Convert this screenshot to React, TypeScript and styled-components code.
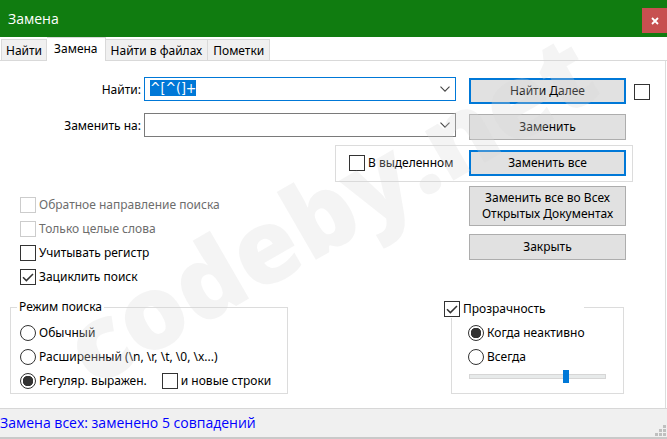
import React, { useEffect, useRef, useState } from "react";
import styled, { createGlobalStyle } from "styled-components";

const GlobalStyle = createGlobalStyle`
  *, *::before, *::after { box-sizing: border-box; }
  body {
    margin: 0;
    background: #ffffff;
    color: #000000;
    font-family: "Noto Sans", "DejaVu Sans", sans-serif;
    font-size: 12px;
    line-height: 16px;
  }
  button, input { font: inherit; color: inherit; }
`;

const Dialog = styled.div`
  position: relative;
  display: flex;
  flex-direction: column;
  min-height: 100vh;
  overflow: hidden;
`;

const TitleBar = styled.header`
  display: flex;
  align-items: center;
  justify-content: space-between;
  height: 37px;
  padding-left: 8px;
  background: #107c10;
  color: #ffffff;
`;

const Title = styled.h1`
  margin: 0;
  font: 400 14px/20px "Open Sans", "Noto Sans", sans-serif;
`;

const CloseButton = styled.button`
  display: flex;
  align-items: center;
  justify-content: center;
  width: 25px;
  height: 25px;
  margin-top: 4px;
  padding: 0;
  border: 0;
  background: #c75050;
`;

const TabBar = styled.nav`
  display: flex;
  align-items: flex-end;
  height: 24px;
  padding-left: 1px;
  border-bottom: 1px solid #d9d9d9;
`;

const Tab = styled.button<{ $active?: boolean }>`
  height: ${(p) => (p.$active ? 24 : 21)}px;
  margin-bottom: ${(p) => (p.$active ? -1 : 0)}px;
  padding: ${(p) => (p.$active ? "0 7px 2px" : "2px 5px 0")};
  border: 1px solid #d9d9d9;
  border-bottom: 0;
  border-left-width: ${(p) => (p.$active ? 0 : 1)}px;
  background: ${(p) => (p.$active ? "#ffffff" : "#f0f0f0")};
  white-space: nowrap;

  &:first-child { padding: 2px 4px 0; }
  & + & { border-left-width: 0; }
`;

const Panel = styled.main`
  flex: 1;
  margin-right: 1px;
  padding: 16px 15px 0 10px;
  border-right: 1px solid #dcdcdc;
`;

const FieldRow = styled.div<{ $trailing?: boolean }>`
  display: flex;
  align-items: flex-start;
  height: 36px;
  padding-right: ${(p) => (p.$trailing ? 0 : 24)}px;
`;

const FieldLabel = styled.label`
  width: 131px;
  margin-right: 3px;
  padding-top: 5px;
  text-align: right;
`;

const Combo = styled.div`
  display: flex;
  flex: 1;
  height: 24px;
  margin-right: 13px;
  border: 1px solid #7a7a7a;
  background: #ffffff;

  &:focus-within { border-color: #0078d7; }
`;

const ComboInput = styled.input`
  flex: 1;
  min-width: 0;
  padding: 0 5px 2px;
  border: 0;
  outline: 0;
  background: transparent;
  font: 14px/16px "DejaVu Sans Condensed", "DejaVu Sans", sans-serif;

  &::selection { background: #0078d7; color: #ffffff; }
`;

const ComboArrow = styled.button`
  display: flex;
  align-items: center;
  justify-content: center;
  width: 20px;
  padding: 0;
  border: 0;
  background: transparent;
`;

const Action = styled.button<{ $primary?: boolean; $tall?: boolean }>`
  width: 157px;
  height: ${(p) => (p.$tall ? 40 : 26)}px;
  padding: 0 4px;
  border: ${(p) => (p.$primary ? "2px solid #0078d7" : "1px solid #adadad")};
  background: #e1e1e1;
`;

const ActionSlot = styled.div`
  margin-top: 1px;
`;

const Check = styled.input.attrs({ type: "checkbox" })`
  appearance: none;
  flex: none;
  width: 16px;
  height: 16px;
  margin: 0;
  border: 1px solid #333333;
  background: #ffffff center / 14px 14px no-repeat;

  &:checked {
    background-image: url("data:image/svg+xml,%3Csvg xmlns='http://www.w3.org/2000/svg' viewBox='0 0 14 14'%3E%3Cpath d='M2 7.2l3.4 3.4L12 4' fill='none' stroke='%23333' stroke-width='1.5'/%3E%3C/svg%3E");
  }
  &:disabled { border-color: #cccccc; }
`;

const Radio = styled.input.attrs({ type: "radio" })`
  appearance: none;
  flex: none;
  width: 16px;
  height: 16px;
  margin: 0;
  border: 1px solid #333333;
  border-radius: 50%;
  background: #ffffff;

  &:checked { background: radial-gradient(circle, #333333 5px, #ffffff 5.5px); }
`;

const Option = styled.label<{ $disabled?: boolean }>`
  display: flex;
  align-items: center;
  gap: 3px;
  height: 24px;
  padding-top: 1px;
  color: ${(p) => (p.$disabled ? "#6d6d6d" : "inherit")};
  white-space: nowrap;
`;

const SideCheck = styled.div`
  display: flex;
  margin: 7px 0 0 8px;
`;

const SelectionRow = styled.div`
  display: flex;
  justify-content: flex-end;
  margin: -4px 17px 0 0;
`;

const SelectionGroup = styled.div`
  display: flex;
  align-items: flex-start;
  justify-content: space-between;
  width: 298px;
  height: 37px;
  padding: 4px 6px 0 13px;
  border: 1px solid #dcdcdc;
`;

const MiddleRow = styled.div`
  display: flex;
  justify-content: space-between;
  padding: 4px 24px 0 10px;
`;

const Options = styled.div`
  padding-top: 6px;
`;

const ActionStack = styled.div`
  display: flex;
  flex-direction: column;
  gap: 8px;
`;

const GroupRow = styled.div`
  display: flex;
  justify-content: space-between;
  align-items: flex-start;
  margin: 8px 26px 0 0;
`;

const Group = styled.fieldset<{ $width: number; $inset: number }>`
  width: ${(p) => p.$width}px;
  height: 98px;
  min-width: 0;
  margin: 0;
  padding: 2px 8px 0 ${(p) => p.$inset}px;
  border: 1px solid #dcdcdc;
`;

const ModeLegend = styled.legend`
  height: 22px;
  margin-left: -3px;
  padding: 3px 2px;
`;

const ToggleLegend = styled.legend`
  position: relative;
  width: 140px;
  height: 22px;
  margin-left: -24px;
  padding: 0;
  background: #ffffff;
`;

const LegendOption = styled(Option)`
  height: 21px;
  padding: 5px 0 0;
`;

const RadioLine = styled.div`
  display: flex;
  gap: 15px;
`;

const Opacity = styled.input.attrs({ type: "range" })`
  appearance: none;
  display: block;
  width: 137px;
  height: 13px;
  margin: 2px 0 0 1px;
  background: transparent;

  &::-webkit-slider-runnable-track {
    height: 5px;
    border: 1px solid #d6d6d6;
    background: #e7eaea;
  }
  &::-webkit-slider-thumb {
    appearance: none;
    width: 6px;
    height: 13px;
    margin-top: -5px;
    background: #0078d7;
  }
`;

const StatusBar = styled.footer`
  display: flex;
  align-items: flex-end;
  justify-content: space-between;
  height: 31px;
  border-top: 1px solid #d7d7d7;
  border-bottom: 2px solid #c9c9c9;
  background: #f0f0f0;
  color: #0000ff;
`;

const StatusText = styled.p`
  margin: 0;
  font: 400 14px/28px "Open Sans", "Noto Sans", sans-serif;
`;

const Watermark = styled.div`
  position: absolute;
  left: 92px;
  bottom: 40px;
  color: rgba(215, 215, 215, 0.28);
  font: 800 103px/100px "Open Sans", sans-serif;
  white-space: nowrap;
  transform: rotate(-30deg);
  transform-origin: 0 89px;
  pointer-events: none;
`;

const Chevron = () => (
  <svg width="10" height="6" viewBox="0 0 10 6" aria-hidden="true">
    <path d="M.5.7 5 5.2 9.5.7" fill="none" stroke="#444" strokeWidth="1.1" />
  </svg>
);

const Grip = () => (
  <svg width="12" height="12" viewBox="0 0 12 12" aria-hidden="true">
    <path d="M8 0h3v3H8zM4 4h3v3H4zM8 4h3v3H8zM0 8h3v3H0zM4 8h3v3H4zM8 8h3v3H8z" fill="#bfbfbf" />
  </svg>
);

export default function App() {
  const findRef = useRef<HTMLInputElement>(null);
  const [mode, setMode] = useState("regex");
  const [fade, setFade] = useState("inactive");

  useEffect(() => {
    findRef.current?.focus();
    findRef.current?.select();
  }, []);

  return (
    <>
      <GlobalStyle />
      <Dialog>
        <TitleBar>
          <Title>Замена</Title>
          <CloseButton aria-label="Закрыть окно">
            <svg width="8" height="8" viewBox="0 0 8 8" aria-hidden="true">
              <path d="M1 1l6 6M7 1L1 7" stroke="#fff" strokeWidth="1.8" />
            </svg>
          </CloseButton>
        </TitleBar>
        <TabBar>
          <Tab>Найти</Tab>
          <Tab $active>Замена</Tab>
          <Tab>Найти в файлах</Tab>
          <Tab>Пометки</Tab>
        </TabBar>
        <Panel>
          <FieldRow $trailing>
            <FieldLabel htmlFor="find">Найти:</FieldLabel>
            <Combo>
              <ComboInput id="find" ref={findRef} defaultValue="^[^(]+" />
              <ComboArrow aria-label="История поиска"><Chevron /></ComboArrow>
            </Combo>
            <ActionSlot><Action $primary>Найти Далее</Action></ActionSlot>
            <SideCheck><Check aria-label="Две кнопки поиска" /></SideCheck>
          </FieldRow>
          <FieldRow>
            <FieldLabel htmlFor="replace">Заменить на:</FieldLabel>
            <Combo>
              <ComboInput id="replace" />
              <ComboArrow aria-label="История замены"><Chevron /></ComboArrow>
            </Combo>
            <ActionSlot><Action>Заменить</Action></ActionSlot>
          </FieldRow>
          <SelectionRow>
            <SelectionGroup>
              <Option><Check />В выделенном</Option>
              <Action $primary>Заменить все</Action>
            </SelectionGroup>
          </SelectionRow>
          <MiddleRow>
            <Options>
              <Option $disabled><Check disabled />Обратное направление поиска</Option>
              <Option $disabled><Check disabled />Только целые слова</Option>
              <Option><Check />Учитывать регистр</Option>
              <Option><Check defaultChecked />Зациклить поиск</Option>
            </Options>
            <ActionStack>
              <Action $tall>Заменить все во Всех Открытых Документах</Action>
              <Action>Закрыть</Action>
            </ActionStack>
          </MiddleRow>
          <GroupRow>
            <Group $width={278} $inset={9}>
              <ModeLegend>Режим поиска</ModeLegend>
              <Option>
                <Radio name="mode" checked={mode === "normal"} onChange={() => setMode("normal")} />
                Обычный
              </Option>
              <Option>
                <Radio name="mode" checked={mode === "extended"} onChange={() => setMode("extended")} />
                {"Расширенный (\\n, \\r, \\t, \\0, \\x...)"}
              </Option>
              <RadioLine>
                <Option>
                  <Radio name="mode" checked={mode === "regex"} onChange={() => setMode("regex")} />
                  Регуляр. выражен.
                </Option>
                <Option><Check />и новые строки</Option>
              </RadioLine>
            </Group>
            <Group $width={173} $inset={16}>
              <ToggleLegend>
                <LegendOption><Check defaultChecked />Прозрачность</LegendOption>
              </ToggleLegend>
              <Option>
                <Radio name="fade" checked={fade === "inactive"} onChange={() => setFade("inactive")} />
                Когда неактивно
              </Option>
              <Option>
                <Radio name="fade" checked={fade === "always"} onChange={() => setFade("always")} />
                Всегда
              </Option>
              <Opacity aria-label="Уровень прозрачности" defaultValue={72} />
            </Group>
          </GroupRow>
        </Panel>
        <StatusBar>
          <StatusText>Замена всех: заменено 5 совпадений</StatusText>
          <Grip />
        </StatusBar>
        <Watermark aria-hidden="true">codeby.net</Watermark>
      </Dialog>
    </>
  );
}
